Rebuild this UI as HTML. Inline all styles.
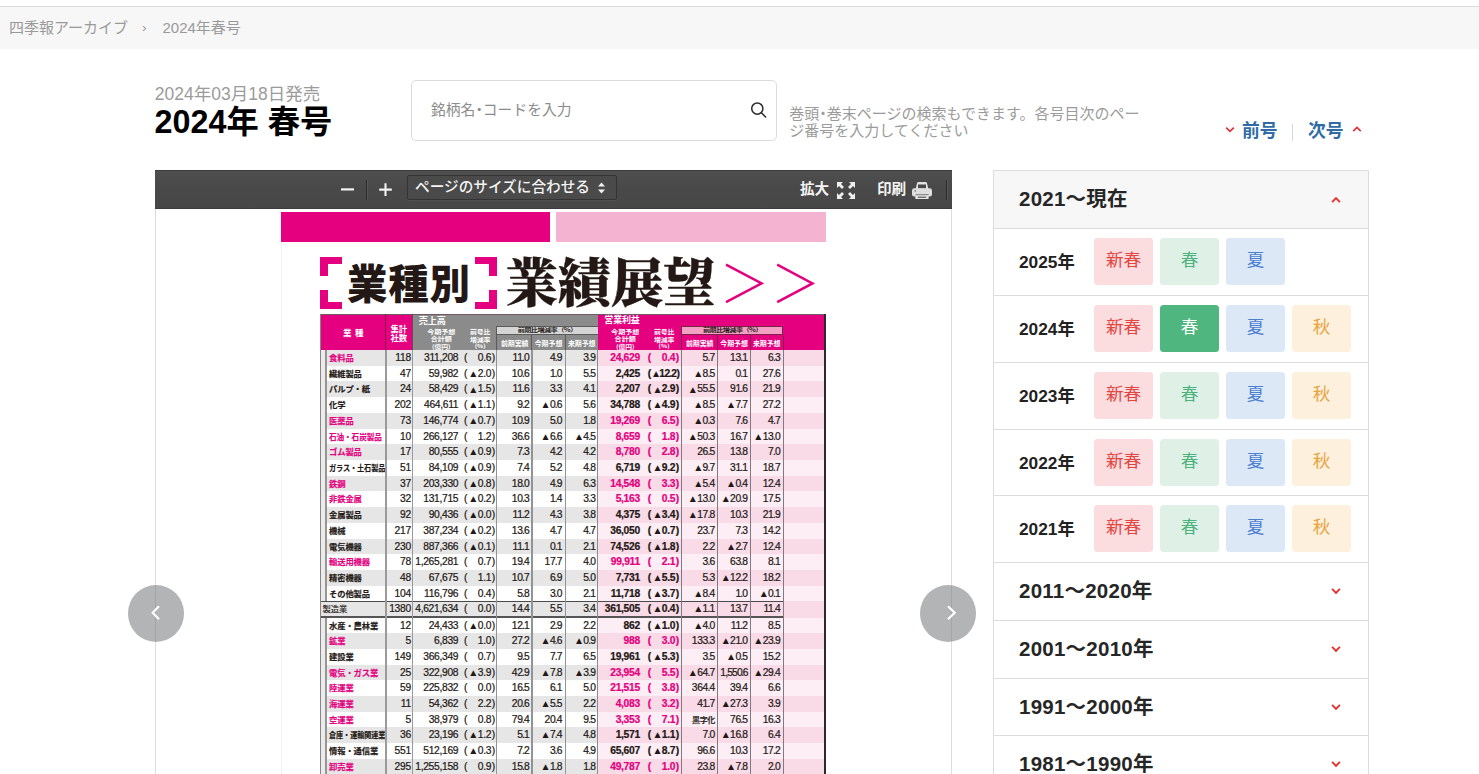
<!DOCTYPE html>
<html lang="ja">
<head>
<meta charset="utf-8">
<title>2024年春号 | 四季報アーカイブ</title>
<style>
*{box-sizing:border-box;margin:0;padding:0}
html,body{width:1479px;height:774px;overflow:hidden;background:#fff}
body{position:relative;font-family:"Liberation Sans","Noto Sans CJK JP",sans-serif;color:#222}
.abs{position:absolute}
/* breadcrumb */
#topline{position:absolute;left:0;top:6px;width:1479px;height:1px;background:#dcdcdc}
#crumb{position:absolute;left:0;top:7px;width:1479px;height:42px;background:#f7f7f7;color:#9a9a9a;font-size:15px;line-height:42px;white-space:nowrap}
#crumb span{position:absolute;top:0}
/* heading */
#date{position:absolute;left:154.8px;top:82.3px;font-size:17.5px;line-height:24px;color:#9b9b9b;white-space:nowrap}
#ttl{position:absolute;left:154.6px;top:101.7px;font-size:32.3px;line-height:40px;font-weight:700;color:#000;white-space:nowrap}
/* search */
#search{position:absolute;left:411px;top:80px;width:366px;height:61px;border:1px solid #dcdcdc;border-radius:5px;background:#fff}
#search .ph{position:absolute;left:19px;top:18px;font-size:14.8px;line-height:22px;color:#8c8c8c;white-space:nowrap}
#search svg{position:absolute;left:337px;top:19px}
#hint{position:absolute;left:789.3px;top:106.2px;font-size:15px;line-height:16.6px;color:#9b9b9b;white-space:nowrap}
.dot{font-weight:900}
/* prev/next */
#pn{position:absolute;top:118px;left:1220px;width:150px;height:26px;font-size:17.8px;font-weight:700;color:#2f6ca5;line-height:26px;white-space:nowrap}
#pn span{position:absolute;top:0}
#pn svg{position:absolute}
#pn i{position:absolute;left:72px;top:6px;width:1px;height:17px;background:#d3d8e0}
/* viewer */
#viewer{position:absolute;left:155px;top:170px;width:797px;height:604px;background:#fff;overflow:hidden}
#vbl,#vbr{position:absolute;top:39px;width:1px;height:570px;background:#dedede}#vbl{left:0}#vbr{left:796px}
#tb{position:absolute;left:0;top:0;width:797px;height:39px;background:linear-gradient(#4f4f4f,#494949 40%,#474747);border-bottom:1px solid #3d3d3d;color:#f4f4f4;font-size:14.6px;font-weight:700;white-space:nowrap;border-top:1px solid #3c3c3c}
#tb .sep{position:absolute;width:1px;background:#2b2b2b;box-shadow:1px 0 0 rgba(255,255,255,.08)}
#tb .sel{position:absolute;left:252px;top:4px;width:210px;height:25px;border:1px solid #333;border-radius:2px;background:#4a4a4a;box-shadow:0 1px 0 rgba(255,255,255,.05)}
#tb .sel span{position:absolute;left:7px;top:0;line-height:23px;font-weight:500;font-size:14.65px}
#tb .lbl{position:absolute;top:8px;line-height:20px}
#tb svg{position:absolute}
/* page */
#page{position:absolute;left:126px;top:42px;width:545px;height:562px;background:#fff;overflow:hidden}
#bar1{position:absolute;left:0;top:0;width:269px;height:30px;background:#e4007f}
#bar2{position:absolute;left:275px;top:0;width:270px;height:30px;background:#f4b3d0}
.brk{position:absolute;top:45px;width:22px;height:52px}
#h1a{position:absolute;left:66px;top:40px;font-family:"Noto Sans CJK JP","Liberation Sans",sans-serif;font-weight:900;font-size:40.5px;line-height:60px;color:#231815;white-space:nowrap;letter-spacing:0.8px}
#h1b{position:absolute;left:224.3px;top:31.3px;font-family:"Noto Serif CJK JP","Noto Serif CJK SC","Liberation Serif",serif;font-weight:900;font-size:52.8px;line-height:72px;color:#231815;white-space:nowrap;letter-spacing:-0.25px;-webkit-text-stroke:0.35px #231815}
#gg{position:absolute;left:441px;top:50px}
/* table header */
#th{position:absolute;left:39px;top:102px;width:506px;height:36px;background:#e4007f;color:#fff;font-family:"Noto Sans CJK JP","Liberation Sans",sans-serif;font-weight:700;white-space:nowrap;border-top:1px solid #6d5a62}
#th .g{position:absolute;left:92.4px;top:0;width:185.5px;height:36px;background:#8b8b8b}
#th span{position:absolute;text-align:center;margin-top:-1px}
#th span.dk{font-weight:700;-webkit-text-stroke:0}
#th .box{position:absolute;margin-top:-1px}
/* rows */
.r{position:absolute;left:0;width:545px;height:16.01px;font-family:"Liberation Sans","Noto Sans CJK JP",sans-serif;font-size:10.3px;line-height:15.41px;letter-spacing:-0.32px;-webkit-text-stroke:0.22px currentColor;color:#231815;white-space:nowrap}
.r b{position:absolute;top:0;height:100%;display:block}
.r .bga{left:39px;width:278px}
.r.o .bga{background:#e6e6e6}
.r.e .bga{background:#fff}
.r .bgp{left:317px;width:228px}
.r.o .bgp{background:#f9dbe8}
.r.e .bgp{background:#fdeef5}
.r span{position:absolute;top:0}
.r .c{}
.r .n{font-family:"Noto Sans CJK JP","Liberation Sans",sans-serif;font-weight:700;font-size:8.3px;letter-spacing:-0.1px;transform-origin:0 50%;line-height:15.110000000000001px;-webkit-text-stroke:0.15px currentColor}
.r u{text-decoration:none;margin:0 -0.55px}
.r .m{color:#e4007f}
.r .tt{font-weight:400}
.r .pc{letter-spacing:0.25px}
.r .pc2{letter-spacing:-0.45px}
.r .pc2 i.t{margin-right:0.4px}
.r .tight{letter-spacing:-0.85px}
.r .pb{font-weight:700}
.r .pm{font-weight:700;color:#e4007f}
.r .k{font-family:"Noto Sans CJK JP",sans-serif;font-size:8px;font-weight:500;letter-spacing:-0.4px}
.r i.t{font-style:normal;font-family:"DejaVu Sans","Noto Sans CJK JP",sans-serif;font-size:7.9px;position:relative;top:-0.9px;margin-right:1.3px;margin-left:-0.4px;letter-spacing:0;-webkit-text-stroke:0;display:inline-block;transform:scaleY(.92)}
.r.tot{height:16.6px}
.r.tot .ln{left:39px;width:463.4px;height:1.1px;background:#4a4a4a}
.r.tot .ln.b{top:auto;bottom:0;height:1.3px;background:#555}
.r.tot .bga{left:39.8px;width:277.2px}
.vl{position:absolute;display:block}
/* nav circles */
.nav{position:absolute;width:56.3px;height:56.8px;border-radius:50%;background:rgba(120,122,125,.56);top:584.9px}
.nav svg{position:absolute;left:0;top:0}
/* sidebar */
#side{position:absolute;left:993px;top:170px;width:376px;height:640px;border:1px solid #dcdcdc;background:#fff}
#sh{position:absolute;left:0;top:0;width:374px;height:57px;background:#f7f7f7}
#side .hl{position:absolute;left:0;width:374px;height:1px;background:#dcdcdc;display:block}
#side .ct{position:absolute;left:25px;font-size:20.5px;font-weight:700;color:#262626;white-space:nowrap;letter-spacing:0.25px;line-height:28px}
#side .chv{position:absolute;left:337.2px}
.yl{position:absolute;left:25px;margin-top:-0.4px;font-size:17.3px;font-weight:700;line-height:24px;color:#222;white-space:nowrap}
.sbtn{position:absolute;width:59px;height:47px;border-radius:3.5px;text-align:center;font-size:17.6px;line-height:45.6px;white-space:nowrap}
.s0{background:#fbdcdf;color:#e2443f}
.s1{background:#dff1e7;color:#4db37d}
.s2{background:#dde8f7;color:#4b7fd1}
.s3{background:#fdf0dc;color:#e7a43f}
.s1.act{background:#4eb67e;color:#fff}
</style>
</head>
<body>
<div id="topline"></div>
<div id="crumb"><span style="left:9px">四季報アーカイブ</span><span style="left:142px;font-size:13.5px">›</span><span style="left:162.5px">2024年春号</span></div>

<div id="date">2024年03月18日発売</div>
<h1 id="ttl">2024年 春号</h1>

<div id="search"><span class="ph">銘柄名<b class="dot">･</b>コードを入力</span>
<svg width="20" height="20" viewBox="0 0 20 20"><circle cx="8.3" cy="8.6" r="5.6" fill="none" stroke="#2b2b2b" stroke-width="1.5"/><path d="M12.4 12.8 L16.6 17.0" stroke="#2b2b2b" stroke-width="1.6" stroke-linecap="round"/></svg>
</div>
<div id="hint">巻頭<b class="dot">･</b>巻末ページの検索もできます。各号目次のペー<br>ジ番号を入力してください</div>

<div id="pn">
<svg style="left:4.5px;top:8px" viewBox="0 0 10 8" width="10" height="8"><path d="M1.2 1.6 L5 5.4 L8.8 1.6" fill="none" stroke="#e0343a" stroke-width="1.7"/></svg>
<span style="left:22px">前号</span><i></i><span style="left:88px">次号</span>
<svg style="left:132px;top:7px" viewBox="0 0 10 8" width="10" height="8"><path d="M1.2 6.2 L5 2.4 L8.8 6.2" fill="none" stroke="#e0343a" stroke-width="1.7"/></svg>
</div>

<div id="viewer">
 <div id="page">
  <div id="bar1"></div><div id="bar2"></div>
  <svg class="brk" style="left:39px" viewBox="0 0 22 52"><path d="M0 0H22V7H8V19H0Z M0 33H8V45H22V52H0Z" fill="#e4007f"/></svg>
  <svg class="brk" style="left:193.5px" viewBox="0 0 22 52"><path d="M22 0H0V7H14V19H22Z M22 33H14V45H0V52H22Z" fill="#e4007f"/></svg>
  <div id="h1a">業種別</div>
  <div id="h1b">業績展望</div>
  <svg id="gg" width="96" height="44" viewBox="0 0 96 44"><path d="M4 2.6 L39.6 21.4 L4 40.2 M55.2 2.6 L90.5 21.4 L55.2 40.2" fill="none" stroke="#e4007f" stroke-width="2.5" stroke-linejoin="miter"/></svg>

<div id="th">
<div class="g"></div>
<span class="" style="left:3.2px;width:60px;top:12.23px;font-size:8.5px;line-height:12.75px">業<i style="margin-left:3.6px;font-style:normal">種</i></span>
<span class="" style="left:48.8px;width:60px;top:7.9px;font-size:8.4px;line-height:12.6px;letter-spacing:-0.1px">集計</span>
<span class="" style="left:48.8px;width:60px;top:16.9px;font-size:8.4px;line-height:12.6px;letter-spacing:-0.1px">社数</span>
<span class="" style="left:82.3px;width:60px;top:-0.5px;font-size:9.2px;line-height:13.8px;letter-spacing:-0.2px">売上高</span>
<span class="" style="left:91.3px;width:60px;top:11.68px;font-size:7.1px;line-height:10.65px;letter-spacing:-0.05px;transform:scaleY(0.86)">今期予想</span>
<span class="" style="left:91.3px;width:60px;top:19.37px;font-size:7.1px;line-height:10.65px;letter-spacing:-0.05px;transform:scaleY(0.86)">合計額</span>
<span class="" style="left:91.3px;width:60px;top:26.8px;font-size:6.8px;line-height:10.2px;letter-spacing:-0.05px;transform:scaleY(0.84)">(億円)</span>
<span class="" style="left:275.2px;width:60px;top:11.68px;font-size:7.1px;line-height:10.65px;letter-spacing:-0.05px;transform:scaleY(0.86)">今期予想</span>
<span class="" style="left:275.2px;width:60px;top:19.37px;font-size:7.1px;line-height:10.65px;letter-spacing:-0.05px;transform:scaleY(0.86)">合計額</span>
<span class="" style="left:275.2px;width:60px;top:26.8px;font-size:6.8px;line-height:10.2px;letter-spacing:-0.05px;transform:scaleY(0.84)">(億円)</span>
<span class="" style="left:130.2px;width:60px;top:11.82px;font-size:6.9px;line-height:10.35px;letter-spacing:-0.1px;transform:scaleY(0.86)">前号比</span>
<span class="" style="left:130.2px;width:60px;top:19.52px;font-size:6.9px;line-height:10.35px;letter-spacing:-0.1px;transform:scaleY(0.86)">増減率</span>
<span class="" style="left:130.2px;width:60px;top:27.2px;font-size:6.4px;line-height:9.6px;letter-spacing:0px;transform:scaleY(0.84)">(%)</span>
<span class="" style="left:314.1px;width:60px;top:11.82px;font-size:6.9px;line-height:10.35px;letter-spacing:-0.1px;transform:scaleY(0.86)">前号比</span>
<span class="" style="left:314.1px;width:60px;top:19.52px;font-size:6.9px;line-height:10.35px;letter-spacing:-0.1px;transform:scaleY(0.86)">増減率</span>
<span class="" style="left:314.1px;width:60px;top:27.2px;font-size:6.4px;line-height:9.6px;letter-spacing:0px;transform:scaleY(0.84)">(%)</span>
<span class="" style="left:272.0px;width:60px;top:-0.55px;font-size:9.0px;line-height:13.5px;letter-spacing:-0.15px">営業利益</span>
<div class="box" style="left:176.39999999999998px;top:12.300000000000011px;width:101.5px;height:8.6px;background:#d5d5d5;border:1px solid #5b5b5b;border-right:0"></div>
<div class="box" style="left:361.0px;top:12.300000000000011px;width:102.39999999999998px;height:8.6px;background:#f2a0c4;border:1px solid #7b2447"></div>
<span class="dk" style="left:187.2px;width:80px;top:11.28px;font-size:7.1px;line-height:10.65px;color:#231815;letter-spacing:-0.5px;transform:scaleY(0.8)">前期比増減率（%）</span>
<span class="dk" style="left:372.5px;width:80px;top:11.28px;font-size:7.1px;line-height:10.65px;color:#231815;letter-spacing:-0.5px;transform:scaleY(0.8)">前期比増減率（%）</span>
<span class="" style="left:164.7px;width:60px;top:23.89px;font-size:6.95px;line-height:10.43px;letter-spacing:-0.05px">前期実績</span>
<span class="" style="left:198.5px;width:60px;top:23.89px;font-size:6.95px;line-height:10.43px;letter-spacing:-0.05px">今期予想</span>
<span class="" style="left:231.7px;width:60px;top:23.89px;font-size:6.95px;line-height:10.43px;letter-spacing:-0.05px">来期予想</span>
<span class="" style="left:349.7px;width:60px;top:23.89px;font-size:6.95px;line-height:10.43px;letter-spacing:-0.05px">前期実績</span>
<span class="" style="left:384.1px;width:60px;top:23.89px;font-size:6.95px;line-height:10.43px;letter-spacing:-0.05px">今期予想</span>
<span class="" style="left:416.7px;width:60px;top:23.89px;font-size:6.95px;line-height:10.43px;letter-spacing:-0.05px">来期予想</span>
</div>
<div class="r o" style="top:138.00px">
<b class="bga"></b><b class="bgp"></b>
<span class="n m" style="left:48px;transform:scaleX(1.0)">食料品</span>
<span class="c " style="right:415.2px">118</span>
<span class="c " style="right:367.8px">311,208</span>
<span class="c" style="left:183.0px">(</span>
<span class="c pc" style="right:330.6px">0<u>.</u>6)</span>
<span class="c " style="right:296.5px">11<u>.</u>0</span>
<span class="c " style="right:263.8px">4<u>.</u>9</span>
<span class="c " style="right:230.4px">3<u>.</u>9</span>
<span class="c pm" style="right:186.2px">24,629</span>
<span class="c pm" style="left:366.8px">(</span>
<span class="c pm pc" style="right:146.5px">0<u>.</u>4)</span>
<span class="c " style="right:111.1px">5<u>.</u>7</span>
<span class="c " style="right:78.3px">13<u>.</u>1</span>
<span class="c " style="right:45.6px">6<u>.</u>3</span>
</div>
<div class="r e" style="top:153.71px">
<b class="bga"></b><b class="bgp"></b>
<span class="n" style="left:48px;transform:scaleX(1.0)">繊維製品</span>
<span class="c " style="right:415.2px">47</span>
<span class="c " style="right:367.8px">59,982</span>
<span class="c" style="left:183.0px">(</span>
<span class="c pc" style="right:330.6px"><i class="t">▲</i>2<u>.</u>0)</span>
<span class="c " style="right:296.5px">10<u>.</u>6</span>
<span class="c " style="right:263.8px">1<u>.</u>0</span>
<span class="c " style="right:230.4px">5<u>.</u>5</span>
<span class="c pb" style="right:186.2px">2,425</span>
<span class="c pb" style="left:366.8px">(</span>
<span class="c pb pc2" style="right:146.5px"><i class="t">▲</i>12<u>.</u>2)</span>
<span class="c " style="right:111.1px"><i class="t">▲</i>8<u>.</u>5</span>
<span class="c " style="right:78.3px">0<u>.</u>1</span>
<span class="c " style="right:45.6px">27<u>.</u>6</span>
</div>
<div class="r o" style="top:169.42px">
<b class="bga"></b><b class="bgp"></b>
<span class="n" style="left:48px;transform:scaleX(1.0)">パルプ・紙</span>
<span class="c " style="right:415.2px">24</span>
<span class="c " style="right:367.8px">58,429</span>
<span class="c" style="left:183.0px">(</span>
<span class="c pc" style="right:330.6px"><i class="t">▲</i>1<u>.</u>5)</span>
<span class="c " style="right:296.5px">11<u>.</u>6</span>
<span class="c " style="right:263.8px">3<u>.</u>3</span>
<span class="c " style="right:230.4px">4<u>.</u>1</span>
<span class="c pb" style="right:186.2px">2,207</span>
<span class="c pb" style="left:366.8px">(</span>
<span class="c pb pc" style="right:146.5px"><i class="t">▲</i>2<u>.</u>9)</span>
<span class="c " style="right:111.1px"><i class="t">▲</i>55<u>.</u>5</span>
<span class="c " style="right:78.3px">91<u>.</u>6</span>
<span class="c " style="right:45.6px">21<u>.</u>9</span>
</div>
<div class="r e" style="top:185.13px">
<b class="bga"></b><b class="bgp"></b>
<span class="n" style="left:48px;transform:scaleX(1.0)">化学</span>
<span class="c " style="right:415.2px">202</span>
<span class="c " style="right:367.8px">464,611</span>
<span class="c" style="left:183.0px">(</span>
<span class="c pc" style="right:330.6px"><i class="t">▲</i>1<u>.</u>1)</span>
<span class="c " style="right:296.5px">9<u>.</u>2</span>
<span class="c " style="right:263.8px"><i class="t">▲</i>0<u>.</u>6</span>
<span class="c " style="right:230.4px">5<u>.</u>6</span>
<span class="c pb" style="right:186.2px">34,788</span>
<span class="c pb" style="left:366.8px">(</span>
<span class="c pb pc" style="right:146.5px"><i class="t">▲</i>4<u>.</u>9)</span>
<span class="c " style="right:111.1px"><i class="t">▲</i>8<u>.</u>5</span>
<span class="c " style="right:78.3px"><i class="t">▲</i>7<u>.</u>7</span>
<span class="c " style="right:45.6px">27<u>.</u>2</span>
</div>
<div class="r o" style="top:200.84px">
<b class="bga"></b><b class="bgp"></b>
<span class="n m" style="left:48px;transform:scaleX(1.0)">医薬品</span>
<span class="c " style="right:415.2px">73</span>
<span class="c " style="right:367.8px">146,774</span>
<span class="c" style="left:183.0px">(</span>
<span class="c pc" style="right:330.6px"><i class="t">▲</i>0<u>.</u>7)</span>
<span class="c " style="right:296.5px">10<u>.</u>9</span>
<span class="c " style="right:263.8px">5<u>.</u>0</span>
<span class="c " style="right:230.4px">1<u>.</u>8</span>
<span class="c pm" style="right:186.2px">19,269</span>
<span class="c pm" style="left:366.8px">(</span>
<span class="c pm pc" style="right:146.5px">6<u>.</u>5)</span>
<span class="c " style="right:111.1px"><i class="t">▲</i>0<u>.</u>3</span>
<span class="c " style="right:78.3px">7<u>.</u>6</span>
<span class="c " style="right:45.6px">4<u>.</u>7</span>
</div>
<div class="r e" style="top:216.55px">
<b class="bga"></b><b class="bgp"></b>
<span class="n m" style="left:48px;transform:scaleX(0.92)">石油・石炭製品</span>
<span class="c " style="right:415.2px">10</span>
<span class="c " style="right:367.8px">266,127</span>
<span class="c" style="left:183.0px">(</span>
<span class="c pc" style="right:330.6px">1<u>.</u>2)</span>
<span class="c " style="right:296.5px">36<u>.</u>6</span>
<span class="c " style="right:263.8px"><i class="t">▲</i>6<u>.</u>6</span>
<span class="c " style="right:230.4px"><i class="t">▲</i>4<u>.</u>5</span>
<span class="c pm" style="right:186.2px">8,659</span>
<span class="c pm" style="left:366.8px">(</span>
<span class="c pm pc" style="right:146.5px">1<u>.</u>8)</span>
<span class="c " style="right:111.1px"><i class="t">▲</i>50<u>.</u>3</span>
<span class="c " style="right:78.3px">16<u>.</u>7</span>
<span class="c " style="right:45.6px"><i class="t">▲</i>13<u>.</u>0</span>
</div>
<div class="r o" style="top:232.26px">
<b class="bga"></b><b class="bgp"></b>
<span class="n m" style="left:48px;transform:scaleX(1.0)">ゴム製品</span>
<span class="c " style="right:415.2px">17</span>
<span class="c " style="right:367.8px">80,555</span>
<span class="c" style="left:183.0px">(</span>
<span class="c pc" style="right:330.6px"><i class="t">▲</i>0<u>.</u>9)</span>
<span class="c " style="right:296.5px">7<u>.</u>3</span>
<span class="c " style="right:263.8px">4<u>.</u>2</span>
<span class="c " style="right:230.4px">4<u>.</u>2</span>
<span class="c pm" style="right:186.2px">8,780</span>
<span class="c pm" style="left:366.8px">(</span>
<span class="c pm pc" style="right:146.5px">2<u>.</u>8)</span>
<span class="c " style="right:111.1px">26<u>.</u>5</span>
<span class="c " style="right:78.3px">13<u>.</u>8</span>
<span class="c " style="right:45.6px">7<u>.</u>0</span>
</div>
<div class="r e" style="top:247.97px">
<b class="bga"></b><b class="bgp"></b>
<span class="n" style="left:48px;transform:scaleX(0.86)">ガラス・土石製品</span>
<span class="c " style="right:415.2px">51</span>
<span class="c " style="right:367.8px">84,109</span>
<span class="c" style="left:183.0px">(</span>
<span class="c pc" style="right:330.6px"><i class="t">▲</i>0<u>.</u>9)</span>
<span class="c " style="right:296.5px">7<u>.</u>4</span>
<span class="c " style="right:263.8px">5<u>.</u>2</span>
<span class="c " style="right:230.4px">4<u>.</u>8</span>
<span class="c pb" style="right:186.2px">6,719</span>
<span class="c pb" style="left:366.8px">(</span>
<span class="c pb pc" style="right:146.5px"><i class="t">▲</i>9<u>.</u>2)</span>
<span class="c " style="right:111.1px"><i class="t">▲</i>9<u>.</u>7</span>
<span class="c " style="right:78.3px">31<u>.</u>1</span>
<span class="c " style="right:45.6px">18<u>.</u>7</span>
</div>
<div class="r o" style="top:263.68px">
<b class="bga"></b><b class="bgp"></b>
<span class="n m" style="left:48px;transform:scaleX(1.0)">鉄鋼</span>
<span class="c " style="right:415.2px">37</span>
<span class="c " style="right:367.8px">203,330</span>
<span class="c" style="left:183.0px">(</span>
<span class="c pc" style="right:330.6px"><i class="t">▲</i>0<u>.</u>8)</span>
<span class="c " style="right:296.5px">18<u>.</u>0</span>
<span class="c " style="right:263.8px">4<u>.</u>9</span>
<span class="c " style="right:230.4px">6<u>.</u>3</span>
<span class="c pm" style="right:186.2px">14,548</span>
<span class="c pm" style="left:366.8px">(</span>
<span class="c pm pc" style="right:146.5px">3<u>.</u>3)</span>
<span class="c " style="right:111.1px"><i class="t">▲</i>5<u>.</u>4</span>
<span class="c " style="right:78.3px"><i class="t">▲</i>0<u>.</u>4</span>
<span class="c " style="right:45.6px">12<u>.</u>4</span>
</div>
<div class="r e" style="top:279.39px">
<b class="bga"></b><b class="bgp"></b>
<span class="n m" style="left:48px;transform:scaleX(1.0)">非鉄金属</span>
<span class="c " style="right:415.2px">32</span>
<span class="c " style="right:367.8px">131,715</span>
<span class="c" style="left:183.0px">(</span>
<span class="c pc" style="right:330.6px"><i class="t">▲</i>0<u>.</u>2)</span>
<span class="c " style="right:296.5px">10<u>.</u>3</span>
<span class="c " style="right:263.8px">1<u>.</u>4</span>
<span class="c " style="right:230.4px">3<u>.</u>3</span>
<span class="c pm" style="right:186.2px">5,163</span>
<span class="c pm" style="left:366.8px">(</span>
<span class="c pm pc" style="right:146.5px">0<u>.</u>5)</span>
<span class="c " style="right:111.1px"><i class="t">▲</i>13<u>.</u>0</span>
<span class="c " style="right:78.3px"><i class="t">▲</i>20<u>.</u>9</span>
<span class="c " style="right:45.6px">17<u>.</u>5</span>
</div>
<div class="r o" style="top:295.10px">
<b class="bga"></b><b class="bgp"></b>
<span class="n" style="left:48px;transform:scaleX(1.0)">金属製品</span>
<span class="c " style="right:415.2px">92</span>
<span class="c " style="right:367.8px">90,436</span>
<span class="c" style="left:183.0px">(</span>
<span class="c pc" style="right:330.6px"><i class="t">▲</i>0<u>.</u>0)</span>
<span class="c " style="right:296.5px">11<u>.</u>2</span>
<span class="c " style="right:263.8px">4<u>.</u>3</span>
<span class="c " style="right:230.4px">3<u>.</u>8</span>
<span class="c pb" style="right:186.2px">4,375</span>
<span class="c pb" style="left:366.8px">(</span>
<span class="c pb pc" style="right:146.5px"><i class="t">▲</i>3<u>.</u>4)</span>
<span class="c " style="right:111.1px"><i class="t">▲</i>17<u>.</u>8</span>
<span class="c " style="right:78.3px">10<u>.</u>3</span>
<span class="c " style="right:45.6px">21<u>.</u>9</span>
</div>
<div class="r e" style="top:310.81px">
<b class="bga"></b><b class="bgp"></b>
<span class="n" style="left:48px;transform:scaleX(1.0)">機械</span>
<span class="c " style="right:415.2px">217</span>
<span class="c " style="right:367.8px">387,234</span>
<span class="c" style="left:183.0px">(</span>
<span class="c pc" style="right:330.6px"><i class="t">▲</i>0<u>.</u>2)</span>
<span class="c " style="right:296.5px">13<u>.</u>6</span>
<span class="c " style="right:263.8px">4<u>.</u>7</span>
<span class="c " style="right:230.4px">4<u>.</u>7</span>
<span class="c pb" style="right:186.2px">36,050</span>
<span class="c pb" style="left:366.8px">(</span>
<span class="c pb pc" style="right:146.5px"><i class="t">▲</i>0<u>.</u>7)</span>
<span class="c " style="right:111.1px">23<u>.</u>7</span>
<span class="c " style="right:78.3px">7<u>.</u>3</span>
<span class="c " style="right:45.6px">14<u>.</u>2</span>
</div>
<div class="r o" style="top:326.52px">
<b class="bga"></b><b class="bgp"></b>
<span class="n" style="left:48px;transform:scaleX(1.0)">電気機器</span>
<span class="c " style="right:415.2px">230</span>
<span class="c " style="right:367.8px">887,366</span>
<span class="c" style="left:183.0px">(</span>
<span class="c pc" style="right:330.6px"><i class="t">▲</i>0<u>.</u>1)</span>
<span class="c " style="right:296.5px">11<u>.</u>1</span>
<span class="c " style="right:263.8px">0<u>.</u>1</span>
<span class="c " style="right:230.4px">2<u>.</u>1</span>
<span class="c pb" style="right:186.2px">74,526</span>
<span class="c pb" style="left:366.8px">(</span>
<span class="c pb pc" style="right:146.5px"><i class="t">▲</i>1<u>.</u>8)</span>
<span class="c " style="right:111.1px">2<u>.</u>2</span>
<span class="c " style="right:78.3px"><i class="t">▲</i>2<u>.</u>7</span>
<span class="c " style="right:45.6px">12<u>.</u>4</span>
</div>
<div class="r e" style="top:342.23px">
<b class="bga"></b><b class="bgp"></b>
<span class="n m" style="left:48px;transform:scaleX(1.0)">輸送用機器</span>
<span class="c " style="right:415.2px">78</span>
<span class="c " style="right:367.8px">1,265,281</span>
<span class="c" style="left:183.0px">(</span>
<span class="c pc" style="right:330.6px">0<u>.</u>7)</span>
<span class="c " style="right:296.5px">19<u>.</u>4</span>
<span class="c " style="right:263.8px">17<u>.</u>7</span>
<span class="c " style="right:230.4px">4<u>.</u>0</span>
<span class="c pm" style="right:186.2px">99,911</span>
<span class="c pm" style="left:366.8px">(</span>
<span class="c pm pc" style="right:146.5px">2<u>.</u>1)</span>
<span class="c " style="right:111.1px">3<u>.</u>6</span>
<span class="c " style="right:78.3px">63<u>.</u>8</span>
<span class="c " style="right:45.6px">8<u>.</u>1</span>
</div>
<div class="r o" style="top:357.94px">
<b class="bga"></b><b class="bgp"></b>
<span class="n" style="left:48px;transform:scaleX(1.0)">精密機器</span>
<span class="c " style="right:415.2px">48</span>
<span class="c " style="right:367.8px">67,675</span>
<span class="c" style="left:183.0px">(</span>
<span class="c pc" style="right:330.6px">1<u>.</u>1)</span>
<span class="c " style="right:296.5px">10<u>.</u>7</span>
<span class="c " style="right:263.8px">6<u>.</u>9</span>
<span class="c " style="right:230.4px">5<u>.</u>0</span>
<span class="c pb" style="right:186.2px">7,731</span>
<span class="c pb" style="left:366.8px">(</span>
<span class="c pb pc" style="right:146.5px"><i class="t">▲</i>5<u>.</u>5)</span>
<span class="c " style="right:111.1px">5<u>.</u>3</span>
<span class="c " style="right:78.3px"><i class="t">▲</i>12<u>.</u>2</span>
<span class="c " style="right:45.6px">18<u>.</u>2</span>
</div>
<div class="r e" style="top:373.65px">
<b class="bga"></b><b class="bgp"></b>
<span class="n" style="left:48px;transform:scaleX(1.0)">その他製品</span>
<span class="c " style="right:415.2px">104</span>
<span class="c " style="right:367.8px">116,796</span>
<span class="c" style="left:183.0px">(</span>
<span class="c pc" style="right:330.6px">0<u>.</u>4)</span>
<span class="c " style="right:296.5px">5<u>.</u>8</span>
<span class="c " style="right:263.8px">3<u>.</u>0</span>
<span class="c " style="right:230.4px">2<u>.</u>1</span>
<span class="c pb" style="right:186.2px">11,718</span>
<span class="c pb" style="left:366.8px">(</span>
<span class="c pb pc" style="right:146.5px"><i class="t">▲</i>3<u>.</u>7)</span>
<span class="c " style="right:111.1px"><i class="t">▲</i>8<u>.</u>4</span>
<span class="c " style="right:78.3px">1<u>.</u>0</span>
<span class="c " style="right:45.6px"><i class="t">▲</i>0<u>.</u>1</span>
</div>
<div class="r o tot" style="top:389.20px">
<b class="bga"></b><b class="bgp"></b><b class="ln"></b><b class="ln b"></b>
<span class="n tt" style="left:41.5px;transform:scaleX(1.0)">製造業</span>
<span class="c " style="right:415.2px">1380</span>
<span class="c " style="right:367.8px">4,621,634</span>
<span class="c" style="left:183.0px">(</span>
<span class="c pc" style="right:330.6px">0<u>.</u>0)</span>
<span class="c " style="right:296.5px">14<u>.</u>4</span>
<span class="c " style="right:263.8px">5<u>.</u>5</span>
<span class="c " style="right:230.4px">3<u>.</u>4</span>
<span class="c pb" style="right:186.2px">361,505</span>
<span class="c pb" style="left:366.8px">(</span>
<span class="c pb pc" style="right:146.5px"><i class="t">▲</i>0<u>.</u>4)</span>
<span class="c " style="right:111.1px"><i class="t">▲</i>1<u>.</u>1</span>
<span class="c " style="right:78.3px">13<u>.</u>7</span>
<span class="c " style="right:45.6px">11<u>.</u>4</span>
</div>
<div class="r e" style="top:405.50px">
<b class="bga"></b><b class="bgp"></b>
<span class="n" style="left:48px;transform:scaleX(1.0)">水産・農林業</span>
<span class="c " style="right:415.2px">12</span>
<span class="c " style="right:367.8px">24,433</span>
<span class="c" style="left:183.0px">(</span>
<span class="c pc" style="right:330.6px"><i class="t">▲</i>0<u>.</u>0)</span>
<span class="c " style="right:296.5px">12<u>.</u>1</span>
<span class="c " style="right:263.8px">2<u>.</u>9</span>
<span class="c " style="right:230.4px">2<u>.</u>2</span>
<span class="c pb" style="right:186.2px">862</span>
<span class="c pb" style="left:366.8px">(</span>
<span class="c pb pc" style="right:146.5px"><i class="t">▲</i>1<u>.</u>0)</span>
<span class="c " style="right:111.1px"><i class="t">▲</i>4<u>.</u>0</span>
<span class="c " style="right:78.3px">11<u>.</u>2</span>
<span class="c " style="right:45.6px">8<u>.</u>5</span>
</div>
<div class="r o" style="top:421.18px">
<b class="bga"></b><b class="bgp"></b>
<span class="n m" style="left:48px;transform:scaleX(1.0)">鉱業</span>
<span class="c " style="right:415.2px">5</span>
<span class="c " style="right:367.8px">6,839</span>
<span class="c" style="left:183.0px">(</span>
<span class="c pc" style="right:330.6px">1<u>.</u>0)</span>
<span class="c " style="right:296.5px">27<u>.</u>2</span>
<span class="c " style="right:263.8px"><i class="t">▲</i>4<u>.</u>6</span>
<span class="c " style="right:230.4px"><i class="t">▲</i>0<u>.</u>9</span>
<span class="c pm" style="right:186.2px">988</span>
<span class="c pm" style="left:366.8px">(</span>
<span class="c pm pc" style="right:146.5px">3<u>.</u>0)</span>
<span class="c " style="right:111.1px">133<u>.</u>3</span>
<span class="c " style="right:78.3px"><i class="t">▲</i>21<u>.</u>0</span>
<span class="c " style="right:45.6px"><i class="t">▲</i>23<u>.</u>9</span>
</div>
<div class="r e" style="top:436.86px">
<b class="bga"></b><b class="bgp"></b>
<span class="n" style="left:48px;transform:scaleX(1.0)">建設業</span>
<span class="c " style="right:415.2px">149</span>
<span class="c " style="right:367.8px">366,349</span>
<span class="c" style="left:183.0px">(</span>
<span class="c pc" style="right:330.6px">0<u>.</u>7)</span>
<span class="c " style="right:296.5px">9<u>.</u>5</span>
<span class="c " style="right:263.8px">7<u>.</u>7</span>
<span class="c " style="right:230.4px">6<u>.</u>5</span>
<span class="c pb" style="right:186.2px">19,961</span>
<span class="c pb" style="left:366.8px">(</span>
<span class="c pb pc" style="right:146.5px"><i class="t">▲</i>5<u>.</u>3)</span>
<span class="c " style="right:111.1px">3<u>.</u>5</span>
<span class="c " style="right:78.3px"><i class="t">▲</i>0<u>.</u>5</span>
<span class="c " style="right:45.6px">15<u>.</u>2</span>
</div>
<div class="r o" style="top:452.54px">
<b class="bga"></b><b class="bgp"></b>
<span class="n m" style="left:48px;transform:scaleX(1.0)">電気・ガス業</span>
<span class="c " style="right:415.2px">25</span>
<span class="c " style="right:367.8px">322,908</span>
<span class="c" style="left:183.0px">(</span>
<span class="c pc" style="right:330.6px"><i class="t">▲</i>3<u>.</u>9)</span>
<span class="c " style="right:296.5px">42<u>.</u>9</span>
<span class="c " style="right:263.8px"><i class="t">▲</i>7<u>.</u>8</span>
<span class="c " style="right:230.4px"><i class="t">▲</i>3<u>.</u>9</span>
<span class="c pm" style="right:186.2px">23,954</span>
<span class="c pm" style="left:366.8px">(</span>
<span class="c pm pc" style="right:146.5px">5<u>.</u>5)</span>
<span class="c " style="right:111.1px"><i class="t">▲</i>64<u>.</u>7</span>
<span class="c tight" style="right:78.3px">1,550<u>.</u>6</span>
<span class="c " style="right:45.6px"><i class="t">▲</i>29<u>.</u>4</span>
</div>
<div class="r e" style="top:468.22px">
<b class="bga"></b><b class="bgp"></b>
<span class="n m" style="left:48px;transform:scaleX(1.0)">陸運業</span>
<span class="c " style="right:415.2px">59</span>
<span class="c " style="right:367.8px">225,832</span>
<span class="c" style="left:183.0px">(</span>
<span class="c pc" style="right:330.6px">0<u>.</u>0)</span>
<span class="c " style="right:296.5px">16<u>.</u>5</span>
<span class="c " style="right:263.8px">6<u>.</u>1</span>
<span class="c " style="right:230.4px">5<u>.</u>0</span>
<span class="c pm" style="right:186.2px">21,515</span>
<span class="c pm" style="left:366.8px">(</span>
<span class="c pm pc" style="right:146.5px">3<u>.</u>8)</span>
<span class="c " style="right:111.1px">364<u>.</u>4</span>
<span class="c " style="right:78.3px">39<u>.</u>4</span>
<span class="c " style="right:45.6px">6<u>.</u>6</span>
</div>
<div class="r o" style="top:483.90px">
<b class="bga"></b><b class="bgp"></b>
<span class="n m" style="left:48px;transform:scaleX(1.0)">海運業</span>
<span class="c " style="right:415.2px">11</span>
<span class="c " style="right:367.8px">54,362</span>
<span class="c" style="left:183.0px">(</span>
<span class="c pc" style="right:330.6px">2<u>.</u>2)</span>
<span class="c " style="right:296.5px">20<u>.</u>6</span>
<span class="c " style="right:263.8px"><i class="t">▲</i>5<u>.</u>5</span>
<span class="c " style="right:230.4px">2<u>.</u>2</span>
<span class="c pm" style="right:186.2px">4,083</span>
<span class="c pm" style="left:366.8px">(</span>
<span class="c pm pc" style="right:146.5px">3<u>.</u>2)</span>
<span class="c " style="right:111.1px">41<u>.</u>7</span>
<span class="c " style="right:78.3px"><i class="t">▲</i>27<u>.</u>3</span>
<span class="c " style="right:45.6px">3<u>.</u>9</span>
</div>
<div class="r e" style="top:499.58px">
<b class="bga"></b><b class="bgp"></b>
<span class="n m" style="left:48px;transform:scaleX(1.0)">空運業</span>
<span class="c " style="right:415.2px">5</span>
<span class="c " style="right:367.8px">38,979</span>
<span class="c" style="left:183.0px">(</span>
<span class="c pc" style="right:330.6px">0<u>.</u>8)</span>
<span class="c " style="right:296.5px">79<u>.</u>4</span>
<span class="c " style="right:263.8px">20<u>.</u>4</span>
<span class="c " style="right:230.4px">9<u>.</u>5</span>
<span class="c pm" style="right:186.2px">3,353</span>
<span class="c pm" style="left:366.8px">(</span>
<span class="c pm pc" style="right:146.5px">7<u>.</u>1)</span>
<span class="c k" style="right:111.1px">黒字化</span>
<span class="c " style="right:78.3px">76<u>.</u>5</span>
<span class="c " style="right:45.6px">16<u>.</u>3</span>
</div>
<div class="r o" style="top:515.26px">
<b class="bga"></b><b class="bgp"></b>
<span class="n" style="left:48px;transform:scaleX(0.86)">倉庫・運輸関連業</span>
<span class="c " style="right:415.2px">36</span>
<span class="c " style="right:367.8px">23,196</span>
<span class="c" style="left:183.0px">(</span>
<span class="c pc" style="right:330.6px"><i class="t">▲</i>1<u>.</u>2)</span>
<span class="c " style="right:296.5px">5<u>.</u>1</span>
<span class="c " style="right:263.8px"><i class="t">▲</i>7<u>.</u>4</span>
<span class="c " style="right:230.4px">4<u>.</u>8</span>
<span class="c pb" style="right:186.2px">1,571</span>
<span class="c pb" style="left:366.8px">(</span>
<span class="c pb pc" style="right:146.5px"><i class="t">▲</i>1<u>.</u>1)</span>
<span class="c " style="right:111.1px">7<u>.</u>0</span>
<span class="c " style="right:78.3px"><i class="t">▲</i>16<u>.</u>8</span>
<span class="c " style="right:45.6px">6<u>.</u>4</span>
</div>
<div class="r e" style="top:530.94px">
<b class="bga"></b><b class="bgp"></b>
<span class="n" style="left:48px;transform:scaleX(1.0)">情報・通信業</span>
<span class="c " style="right:415.2px">551</span>
<span class="c " style="right:367.8px">512,169</span>
<span class="c" style="left:183.0px">(</span>
<span class="c pc" style="right:330.6px"><i class="t">▲</i>0<u>.</u>3)</span>
<span class="c " style="right:296.5px">7<u>.</u>2</span>
<span class="c " style="right:263.8px">3<u>.</u>6</span>
<span class="c " style="right:230.4px">4<u>.</u>9</span>
<span class="c pb" style="right:186.2px">65,607</span>
<span class="c pb" style="left:366.8px">(</span>
<span class="c pb pc" style="right:146.5px"><i class="t">▲</i>8<u>.</u>7)</span>
<span class="c " style="right:111.1px">96<u>.</u>6</span>
<span class="c " style="right:78.3px">10<u>.</u>3</span>
<span class="c " style="right:45.6px">17<u>.</u>2</span>
</div>
<div class="r o" style="top:546.62px">
<b class="bga"></b><b class="bgp"></b>
<span class="n m" style="left:48px;transform:scaleX(1.0)">卸売業</span>
<span class="c " style="right:415.2px">295</span>
<span class="c " style="right:367.8px">1,255,158</span>
<span class="c" style="left:183.0px">(</span>
<span class="c pc" style="right:330.6px">0<u>.</u>9)</span>
<span class="c " style="right:296.5px">15<u>.</u>8</span>
<span class="c " style="right:263.8px"><i class="t">▲</i>1<u>.</u>8</span>
<span class="c " style="right:230.4px">1<u>.</u>8</span>
<span class="c pm" style="right:186.2px">49,787</span>
<span class="c pm" style="left:366.8px">(</span>
<span class="c pm pc" style="right:146.5px">1<u>.</u>0)</span>
<span class="c " style="right:111.1px">23<u>.</u>8</span>
<span class="c " style="right:78.3px"><i class="t">▲</i>7<u>.</u>8</span>
<span class="c " style="right:45.6px">2<u>.</u>0</span>
</div>
<div class="r e" style="top:562.30px">
<b class="bga"></b><b class="bgp"></b>
<span class="n" style="left:48px;transform:scaleX(1.0)">小売業</span>
</div>
<b class="vl" style="left:-0.4px;top:30px;width:1px;background:#f0f0f0;bottom:0"></b>
<b class="vl" style="left:39px;top:102px;width:1px;background:#8a8486;bottom:0"></b>
<b class="vl" style="left:39.8px;top:138px;width:5px;background:#ebebeb;height:251px"></b>
<b class="vl" style="left:44.4px;top:138px;width:1.2px;background:#959595;height:251px"></b>
<b class="vl" style="left:39.8px;top:406px;width:5px;background:#ebebeb;bottom:0"></b>
<b class="vl" style="left:44.4px;top:406px;width:1.2px;background:#959595;bottom:0"></b>
<b class="vl" style="left:104.0px;top:102px;width:1.2px;background:rgba(70,10,40,.55);height:36px"></b>
<b class="vl" style="left:131.0px;top:102px;width:1.2px;background:rgba(70,10,40,.5);height:36px"></b>
<b class="vl" style="left:104.0px;top:138px;width:1.5px;background:#9a9a9a;bottom:0"></b>
<b class="vl" style="left:130.7px;top:138px;width:1.5px;background:#9a9a9a;bottom:0"></b>
<b class="vl" style="left:214.9px;top:123px;width:1.2px;background:#5b5b5b;height:15px"></b>
<b class="vl" style="left:250.0px;top:123px;width:1.2px;background:#5b5b5b;height:15px"></b>
<b class="vl" style="left:283.8px;top:123px;width:1.2px;background:#5b5b5b;height:15px"></b>
<b class="vl" style="left:215px;top:138px;width:1.3px;background:#939393;bottom:0"></b>
<b class="vl" style="left:250.3px;top:138px;width:1.3px;background:#939393;bottom:0"></b>
<b class="vl" style="left:283.6px;top:138px;width:1.3px;background:#939393;bottom:0"></b>
<b class="vl" style="left:316px;top:138px;width:1.2px;background:#8c8c8c;bottom:0"></b>
<b class="vl" style="left:400.2px;top:123px;width:1.2px;background:#7b2447;height:15px"></b>
<b class="vl" style="left:400.2px;top:138px;width:1.3px;background:#85787d;bottom:0"></b>
<b class="vl" style="left:436.2px;top:123px;width:1.2px;background:#7b2447;height:15px"></b>
<b class="vl" style="left:436.2px;top:138px;width:1.3px;background:#85787d;bottom:0"></b>
<b class="vl" style="left:468.8px;top:123px;width:1.2px;background:#7b2447;height:15px"></b>
<b class="vl" style="left:468.8px;top:138px;width:1.3px;background:#85787d;bottom:0"></b>
<b class="vl" style="left:501.5px;top:123px;width:1.2px;background:#7b2447;height:15px"></b>
<b class="vl" style="left:501.5px;top:138px;width:1.3px;background:#85787d;bottom:0"></b>
<b class="vl" style="left:543.3px;top:102px;width:1.6px;background:#30252a;bottom:0"></b>
 </div>
 <b id="vbl"></b><b id="vbr"></b>
 <div id="tb">
  <svg style="left:185.6px;top:17.2px" width="14" height="3"><rect width="13" height="2.2" y="0.3" fill="#f2f2f2"/></svg>
  <b class="sep" style="left:211px;top:9px;height:20px"></b>
  <svg style="left:223.7px;top:11.6px" width="14" height="14"><path d="M0.2 6.6H12.8 M6.5 0.3V12.9" stroke="#f2f2f2" stroke-width="2.1"/></svg>
  <div class="sel"><span>ページのサイズに合わせる</span>
   <svg style="left:189px;top:6px" width="9" height="12" viewBox="0 0 9 12"><path d="M4.5 0.5 L8 4.6 H1Z M4.5 11.5 L8 7.4 H1Z" fill="#f2f2f2"/></svg>
  </div>
  <span class="lbl" style="left:645px">拡大</span>
  <svg style="left:682px;top:11px" width="18" height="17" viewBox="0 0 18 17"><g fill="#efefef"><path d="M0 0H6L4 2L7 5L5 7L2 4L0 6Z"/><path d="M18 0H12L14 2L11 5L13 7L16 4L18 6Z"/><path d="M0 17H6L4 15L7 12L5 10L2 13L0 11Z"/><path d="M18 17H12L14 15L11 12L13 10L16 13L18 11Z"/></g></svg>
  <span class="lbl" style="left:722px">印刷</span>
  <svg style="left:756.5px;top:10.8px" width="20" height="17.5" viewBox="0 0 20 17.5"><path d="M3.6 7 L5 1.2 Q5.3 0 6.5 0 H13.500 Q14.7 0 15 1.2 L16.4 7 Z M6 2.5 V6.6 H14 V2.5 Z" fill="#e2e2e2" fill-rule="evenodd"/><rect x="0" y="6.3" width="20" height="8.2" rx="2.2" fill="#dedede"/><circle cx="3.3" cy="8.9" r="0.8" fill="#777"/><path d="M3.4 12.6 H16.6 V16.2 Q16.6 17.5 15.3 17.5 H4.7 Q3.4 17.5 3.4 16.2 Z" fill="#e6e6e6"/><rect x="3.4" y="12.3" width="13.2" height="0.9" fill="#6a6a6a"/><rect x="5.8" y="14.6" width="8.4" height="1.2" fill="#5a5a5a"/></svg>
  <b class="sep" style="left:791px;top:9px;height:20px"></b>
 </div>
</div>

<div class="nav" style="left:127.8px"><svg width="57" height="57"><path d="M31 21.3 L24.700 27.75 L31 34.2" fill="none" stroke="#fff" stroke-width="2.2"/></svg></div>
<div class="nav" style="left:919.8px"><svg width="57" height="57"><path d="M28 21.3 L34.700 27.75 L28 34.2" fill="none" stroke="#fff" stroke-width="2.2"/></svg></div>

<div id="side">
 <div id="sh"></div>
 <span class="ct" style="top:14.3px">2021～現在</span><svg class="chv" style="top:25.4px" viewBox="0 0 10 8" width="10" height="8"><path d="M1.1 6.1 L5 2.2 L8.900 6.1" fill="none" stroke="#e3322e" stroke-width="1.9"/></svg>
<b class="hl" style="top:57px"></b>
<b class="hl" style="top:124px"></b>
<b class="hl" style="top:191px"></b>
<b class="hl" style="top:258px"></b>
<b class="hl" style="top:324px"></b>
<b class="hl" style="top:391px"></b>
<b class="hl" style="top:449px"></b>
<b class="hl" style="top:507px"></b>
<b class="hl" style="top:564px"></b>
<span class="yl" style="top:79.2px">2025年</span>
<span class="sbtn s0" style="left:100.00px;top:67px">新春</span>
<span class="sbtn s1" style="left:166.05px;top:67px">春</span>
<span class="sbtn s2" style="left:232.10px;top:67px">夏</span>
<span class="yl" style="top:146.2px">2024年</span>
<span class="sbtn s0" style="left:100.00px;top:134px">新春</span>
<span class="sbtn s1 act" style="left:166.05px;top:134px">春</span>
<span class="sbtn s2" style="left:232.10px;top:134px">夏</span>
<span class="sbtn s3" style="left:298.15px;top:134px">秋</span>
<span class="yl" style="top:213.2px">2023年</span>
<span class="sbtn s0" style="left:100.00px;top:201px">新春</span>
<span class="sbtn s1" style="left:166.05px;top:201px">春</span>
<span class="sbtn s2" style="left:232.10px;top:201px">夏</span>
<span class="sbtn s3" style="left:298.15px;top:201px">秋</span>
<span class="yl" style="top:280.2px">2022年</span>
<span class="sbtn s0" style="left:100.00px;top:268px">新春</span>
<span class="sbtn s1" style="left:166.05px;top:268px">春</span>
<span class="sbtn s2" style="left:232.10px;top:268px">夏</span>
<span class="sbtn s3" style="left:298.15px;top:268px">秋</span>
<span class="yl" style="top:346.2px">2021年</span>
<span class="sbtn s0" style="left:100.00px;top:334px">新春</span>
<span class="sbtn s1" style="left:166.05px;top:334px">春</span>
<span class="sbtn s2" style="left:232.10px;top:334px">夏</span>
<span class="sbtn s3" style="left:298.15px;top:334px">秋</span>
<span class="ct" style="top:406.3px">2011～2020年</span><svg class="chv" style="top:416.4px" viewBox="0 0 10 8" width="10" height="8"><path d="M1.1 1.9 L5 5.8 L8.900 1.9" fill="none" stroke="#e3322e" stroke-width="1.9"/></svg>
<span class="ct" style="top:464.3px">2001～2010年</span><svg class="chv" style="top:474.4px" viewBox="0 0 10 8" width="10" height="8"><path d="M1.1 1.9 L5 5.8 L8.900 1.9" fill="none" stroke="#e3322e" stroke-width="1.9"/></svg>
<span class="ct" style="top:522.3px">1991～2000年</span><svg class="chv" style="top:532.4px" viewBox="0 0 10 8" width="10" height="8"><path d="M1.1 1.9 L5 5.8 L8.900 1.9" fill="none" stroke="#e3322e" stroke-width="1.9"/></svg>
<span class="ct" style="top:579.3px">1981～1990年</span><svg class="chv" style="top:589.4px" viewBox="0 0 10 8" width="10" height="8"><path d="M1.1 1.9 L5 5.8 L8.900 1.9" fill="none" stroke="#e3322e" stroke-width="1.9"/></svg>
</div>
</body>
</html>
